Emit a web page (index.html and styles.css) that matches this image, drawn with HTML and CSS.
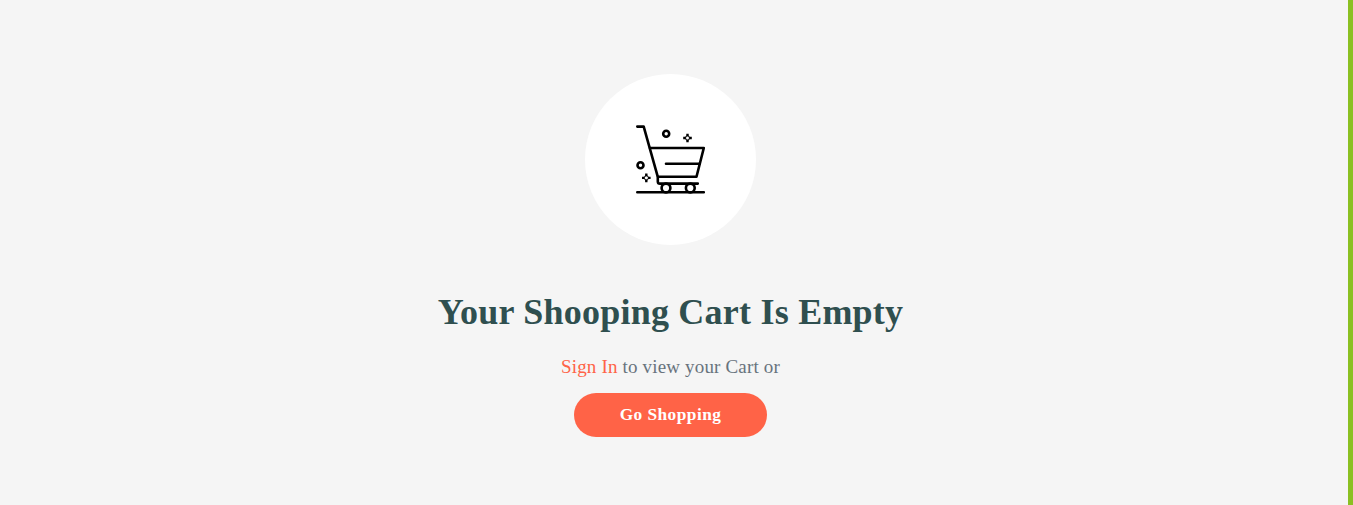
FILE: index.html
```
<!DOCTYPE html>
<html lang="en">
<head>
<meta charset="utf-8">
<title>Shopping Cart</title>
<link rel="stylesheet" href="styles.css">
</head>
<body>
<main class="empty-cart">
  <div class="cart-badge">
    <svg class="cart-icon" viewBox="0 0 91 91" fill="none" stroke="#000" stroke-width="2.6" stroke-linecap="round" stroke-linejoin="round" aria-hidden="true">
      <path d="M12.3 11.6H18.7L32.8 61.8V66.4Q32.8 68.6 35 68.6H72.8"/>
      <path d="M25 33H78.8L71.5 61.7H33"/>
      <path d="M41 48.7H74.5M12.3 77.2H78.8"/>
      <circle cx="41" cy="73" r="4.4"/>
      <circle cx="65.3" cy="73" r="4.4"/>
      <circle cx="41.2" cy="18.8" r="3"/>
      <circle cx="15.5" cy="50.2" r="3"/>
      <path class="sparkle-core" d="M62.5 20.3L65.2 23L62.5 25.7L59.8 23ZM21.3 60.2L24 62.9L21.3 65.6L18.6 62.9Z"/>
      <path class="sparkle" d="M62.5 18.7V21.3M62.5 24.7V27.3M58.2 23H60.8M64.2 23H66.8M21.3 58.6V61.2M21.3 64.6V67.2M17 62.9H19.6M23 62.9H25.6"/>
    </svg>
  </div>
  <h1 class="title">Your Shooping Cart Is Empty</h1>
  <p class="message"><a class="sign-in">Sign In</a> to view your Cart or</p>
  <button class="shop-button">Go Shopping</button>
</main>
</body>
</html>
```
FILE: styles.css
```
* { box-sizing: border-box; }
body {
  margin: 0;
  background: #f5f5f5;
  font-family: "Liberation Serif", "Times New Roman", serif;
}
.empty-cart {
  display: flex;
  flex-direction: column;
  align-items: center;
  height: 505px;
  padding: 74px 7px 0 0;
  border-right: 5px solid #8bc022;
}
.cart-badge {
  display: flex;
  align-items: center;
  justify-content: center;
  width: 171px;
  height: 171px;
  border-radius: 50%;
  background: #fff;
}
.cart-icon { width: 91px; height: 91px; margin: 2px 0 0; }
.sparkle { stroke-width: 2.4; stroke-linecap: butt; }
.sparkle-core { stroke: #333; stroke-width: 1.2; }
.title {
  margin: 46px 0 0;
  font-size: 36px;
  line-height: 42px;
  letter-spacing: 0.23px;
  color: #2f4f4f;
  white-space: nowrap;
}
.message {
  margin: 23px 0 0;
  font-size: 19px;
  line-height: 22px;
  letter-spacing: 0.17px;
  color: #68737d;
}
.sign-in { color: #ff6347; }
.shop-button {
  width: 193px;
  height: 44px;
  margin-top: 15px;
  padding: 0 0 1px;
  border: 0;
  border-radius: 22px;
  background: #ff6347;
  color: #fff;
  font: bold 17.3px/20px "Liberation Serif", "Times New Roman", serif;
  letter-spacing: 0.47px;
}
```
